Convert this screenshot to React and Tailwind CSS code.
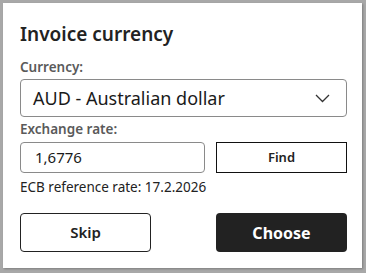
import React from 'react'

const font = { fontFamily: '"Noto Sans", "Open Sans", sans-serif' }

const App = () => {
  return (
    <div className="w-[366px] h-[273px] bg-[#a8a8a8] pt-[3px] pl-[3px]" style={font}>
      <div className="w-[359px] h-[265px] bg-white pl-[17px] pr-[15px] pt-[19px] flex flex-col shadow-[1px_1px_2px_rgba(0,0,0,0.25)]">
        <h1 className="text-[19px] leading-[24px] font-semibold text-[#222]">Invoice currency</h1>

        <label className="mt-[13px] text-[13.5px] leading-[16px] font-semibold text-[#5a5a5a]">Currency:</label>
        <div className="mt-[4px] h-[38px] border border-[#8a8a8a] rounded-[4px] flex items-center justify-between pl-[12px] pr-[16px]">
          <span className="text-[18px] text-[#1a1a1a]">AUD - Australian dollar</span>
          <svg width="15" height="9" viewBox="0 0 15 9" fill="none" stroke="#333" strokeWidth="1.3">
            <path d="M1 1l6.5 6.5L14 1" />
          </svg>
        </div>

        <label className="mt-[4px] text-[13.5px] leading-[16px] font-semibold text-[#5a5a5a]">Exchange rate:</label>
        <div className="mt-[5px] flex gap-[11px]">
          <div className="w-[185px] h-[31px] border border-[#8a8a8a] rounded-[4px] flex items-center pl-[14px] text-[15px] text-[#1a1a1a]">
            1,6776
          </div>
          <button className="w-[131px] h-[31px] border border-[#111] text-[13px] font-semibold text-[#222]">Find</button>
        </div>
        <div className="mt-[6px] text-[13.5px] leading-[16px] text-[#222]">ECB reference rate: 17.2.2026</div>

        <div className="mt-[18px] flex justify-between">
          <button className="w-[131px] h-[39px] border border-[#222] rounded-[4px] text-[15px] font-semibold text-[#222]">Skip</button>
          <button className="w-[131px] h-[39px] bg-[#222] rounded-[4px] text-[16px] font-bold text-white">Choose</button>
        </div>
      </div>
    </div>
  )
}

export default App
